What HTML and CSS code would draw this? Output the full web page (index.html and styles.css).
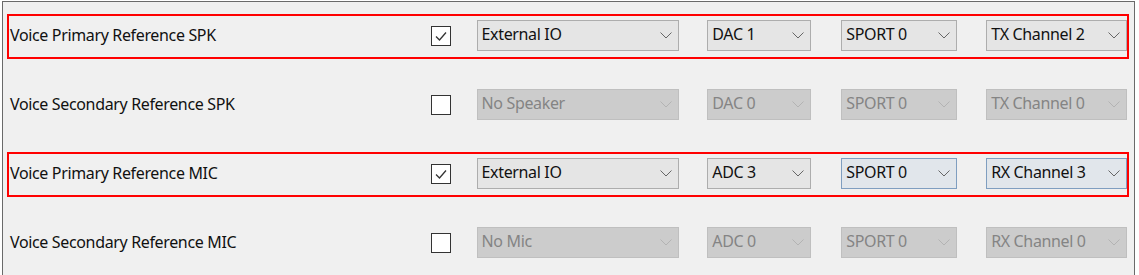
FILE: index.html
```html
<!DOCTYPE html>
<html lang="en">
<head>
    <meta charset="UTF-8">
    <meta name="viewport" content="width=device-width, initial-scale=1.0">
    <title>Voice Reference</title>
    <link rel="stylesheet" href="styles.css">
</head>
<body>
    <div class="panel">
        <div class="row marked">
            <div class="label">Voice Primary Reference SPK</div>
            <div class="check"><svg viewBox="0 0 18 18"><path d="M4 9.5 L7.5 13 L14 5.5"/></svg></div>
            <div class="combo w-src"><span>External IO</span><svg viewBox="0 0 12 7"><path d="M0.5 0.5 L6 6 L11.5 0.5"/></svg></div>
            <div class="combo w-dac"><span>DAC 1</span><svg viewBox="0 0 12 7"><path d="M0.5 0.5 L6 6 L11.5 0.5"/></svg></div>
            <div class="combo w-sport"><span>SPORT 0</span><svg viewBox="0 0 12 7"><path d="M0.5 0.5 L6 6 L11.5 0.5"/></svg></div>
            <div class="combo w-chan"><span>TX Channel 2</span><svg viewBox="0 0 12 7"><path d="M0.5 0.5 L6 6 L11.5 0.5"/></svg></div>
        </div>

        <div class="row">
            <div class="label">Voice Secondary Reference SPK</div>
            <div class="check"></div>
            <div class="combo w-src off"><span>No Speaker</span><svg viewBox="0 0 12 7"><path d="M0.5 0.5 L6 6 L11.5 0.5"/></svg></div>
            <div class="combo w-dac off"><span>DAC 0</span><svg viewBox="0 0 12 7"><path d="M0.5 0.5 L6 6 L11.5 0.5"/></svg></div>
            <div class="combo w-sport off"><span>SPORT 0</span><svg viewBox="0 0 12 7"><path d="M0.5 0.5 L6 6 L11.5 0.5"/></svg></div>
            <div class="combo w-chan off"><span>TX Channel 0</span><svg viewBox="0 0 12 7"><path d="M0.5 0.5 L6 6 L11.5 0.5"/></svg></div>
        </div>

        <div class="row marked">
            <div class="label">Voice Primary Reference MIC</div>
            <div class="check"><svg viewBox="0 0 18 18"><path d="M4 9.5 L7.5 13 L14 5.5"/></svg></div>
            <div class="combo w-src"><span>External IO</span><svg viewBox="0 0 12 7"><path d="M0.5 0.5 L6 6 L11.5 0.5"/></svg></div>
            <div class="combo w-dac"><span>ADC 3</span><svg viewBox="0 0 12 7"><path d="M0.5 0.5 L6 6 L11.5 0.5"/></svg></div>
            <div class="combo w-sport hot"><span>SPORT 0</span><svg viewBox="0 0 12 7"><path d="M0.5 0.5 L6 6 L11.5 0.5"/></svg></div>
            <div class="combo w-chan hot"><span>RX Channel 3</span><svg viewBox="0 0 12 7"><path d="M0.5 0.5 L6 6 L11.5 0.5"/></svg></div>
        </div>

        <div class="row">
            <div class="label">Voice Secondary Reference MIC</div>
            <div class="check"></div>
            <div class="combo w-src off"><span>No Mic</span><svg viewBox="0 0 12 7"><path d="M0.5 0.5 L6 6 L11.5 0.5"/></svg></div>
            <div class="combo w-dac off"><span>ADC 0</span><svg viewBox="0 0 12 7"><path d="M0.5 0.5 L6 6 L11.5 0.5"/></svg></div>
            <div class="combo w-sport off"><span>SPORT 0</span><svg viewBox="0 0 12 7"><path d="M0.5 0.5 L6 6 L11.5 0.5"/></svg></div>
            <div class="combo w-chan off"><span>RX Channel 0</span><svg viewBox="0 0 12 7"><path d="M0.5 0.5 L6 6 L11.5 0.5"/></svg></div>
        </div>
    </div>
</body>
</html>
```

FILE: styles.css
```css
body {
    margin: 0;
    background: #ffffff;
    font-family: "Noto Sans", "Open Sans", sans-serif;
    font-size: 16px;
    letter-spacing: -0.35px;
    color: #111111;
}
.panel {
    margin: 1px 4px 1px 2px;
    height: 271px;
    background: #f0f0f0;
    border: 1px solid #6a6a6a;
    padding: 12px 5px 0 4px;
    display: flex;
    flex-direction: column;
    gap: 24px;
}
.row {
    height: 41px;
    border: 2px solid transparent;
    display: flex;
    align-items: center;
}
.row.marked {
    border-color: #ff0000;
}
.label {
    width: 421px;
    padding-left: 1px;
    margin-top: -3px;
    white-space: nowrap;
}
.check {
    width: 18px;
    height: 18px;
    border: 1px solid #333333;
    background: #ffffff;
    margin-top: -2px;
}
.check svg {
    display: block;
    width: 18px;
    height: 18px;
    fill: none;
    stroke: #333333;
    stroke-width: 1.3;
}
.combo {
    box-sizing: border-box;
    height: 31px;
    margin-top: -3px;
    border: 1px solid #adadad;
    background: #e5e5e5;
    display: flex;
    align-items: center;
    justify-content: space-between;
    padding: 0 6px 2px 4px;
}
.combo svg {
    width: 12px;
    height: 7px;
    margin-top: 2px;
    fill: none;
    stroke: #666666;
    stroke-width: 1;
}
.combo.off {
    background: #cccccc;
    border-color: #bfbfbf;
    color: #848484;
}
.combo.off svg {
    stroke: #b3b3b3;
}
.combo.hot {
    border-color: #7f9ec0;
    background: #e1e6eb;
}
.w-src {
    width: 203px;
    margin-left: 26px;
}
.w-dac {
    width: 104px;
    margin-left: 28px;
}
.w-sport {
    width: 116px;
    margin-left: 30px;
}
.w-chan {
    width: 141px;
    margin-left: 29px;
}
```
